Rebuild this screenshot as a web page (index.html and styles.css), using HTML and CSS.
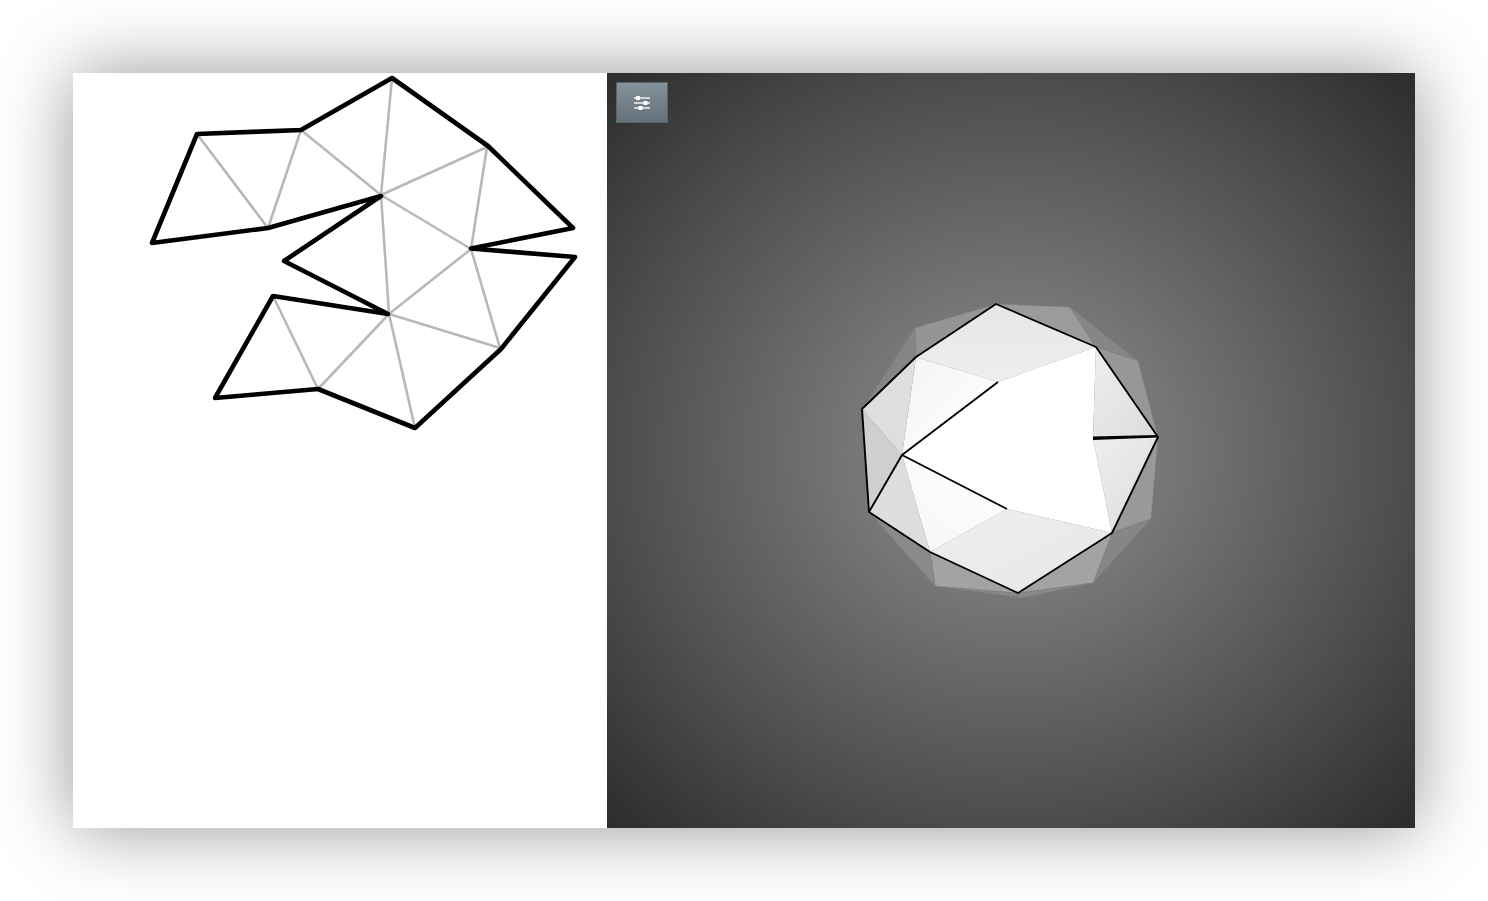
FILE: index.html
```html
<!DOCTYPE html>
<html lang="en">
<head>
  <meta charset="UTF-8" />
  <title>Origami</title>
  <link rel="stylesheet" href="styles.css">
</head>
<body>
  <div class="window">
    <div class="pattern-pane">
      <svg class="drawing pattern" viewBox="73 73 534 755">
        <g class="creases">
          <line x1="197" y1="134" x2="268" y2="228" />
          <line x1="301" y1="130" x2="268" y2="228" />
          <line x1="301" y1="130" x2="381" y2="195" />
          <line x1="392" y1="78" x2="381" y2="195" />
          <line x1="381" y1="195" x2="487" y2="147" />
          <line x1="487" y1="147" x2="471" y2="249" />
          <line x1="381" y1="195" x2="471" y2="249" />
          <line x1="381" y1="195" x2="389" y2="314" />
          <line x1="471" y1="249" x2="389" y2="314" />
          <line x1="471" y1="249" x2="500" y2="348" />
          <line x1="389" y1="314" x2="500" y2="348" />
          <line x1="389" y1="314" x2="318" y2="389" />
          <line x1="389" y1="314" x2="415" y2="428" />
          <line x1="273" y1="296" x2="318" y2="389" />
        </g>
        <polygon class="outline" points="392,78 488,146 573,228 471,248.5 575,257 501,349 415,428 318,389 215,398 273,296 388,314 284,261 381,196 268,228 152,243 197,134 301,130" />
      </svg>
    </div>

    <div class="preview-pane">
      <button class="settings-btn">
        <svg class="settings-icon" viewBox="0 0 20 16">
          <line x1="2" y1="3" x2="18" y2="3" />
          <line x1="2" y1="8" x2="18" y2="8" />
          <line x1="2" y1="13" x2="18" y2="13" />
          <rect x="4" y="1" width="4" height="4" rx="0.5" />
          <rect x="11.5" y="6" width="4" height="4" rx="0.5" />
          <rect x="6.5" y="11" width="4" height="4" rx="0.5" />
        </svg>
      </button>

      <svg class="drawing model" viewBox="607 73 808 755">
        <defs>
          <linearGradient id="top-face" x1="0" y1="0" x2="0" y2="1">
            <stop offset="0" stop-color="#e6e6e6" />
            <stop offset="1" stop-color="#eeeeee" />
          </linearGradient>
          <linearGradient id="upper-left-face" x1="0" y1="0" x2="1" y2="1">
            <stop offset="0" stop-color="#f4f4f4" />
            <stop offset="1" stop-color="#ffffff" />
          </linearGradient>
          <linearGradient id="lower-left-face" x1="1" y1="0" x2="0" y2="1">
            <stop offset="0" stop-color="#ffffff" />
            <stop offset="1" stop-color="#f6f6f6" />
          </linearGradient>
          <linearGradient id="right-face" x1="0" y1="0" x2="1" y2="1">
            <stop offset="0" stop-color="#eeeeee" />
            <stop offset="1" stop-color="#dcdcdc" />
          </linearGradient>
          <linearGradient id="bottom-face" x1="0" y1="0" x2="1" y2="1">
            <stop offset="0" stop-color="#efefef" />
            <stop offset="1" stop-color="#e6e6e6" />
          </linearGradient>
        </defs>

        <!-- back of the model -->
        <g class="back-faces">
          <polygon fill="#858585" points="862,409 915,328 916,357" />
          <polygon fill="#959595" points="915,328 996,304 916,357" />
          <polygon fill="#9b9b9b" points="996,304 1070,307 1096,347" />
          <polygon fill="#868686" points="1070,307 1138,361 1096,347" />
          <polygon fill="#979797" points="1096,347 1138,361 1158,437" />
          <polygon fill="#999999" points="1158,437 1151,519 1112,533" />
          <polygon fill="#868686" points="1112,533 1151,519 1093,583" />
          <polygon fill="#a3a3a3" points="1112,533 1093,583 1018,593" />
          <polygon fill="#888888" points="1018,593 1093,583 1022,598 935,586" />
          <polygon fill="#a3a3a3" points="930,552 935,586 1018,593" />
          <polygon fill="#8a8a8a" points="869,512 930,552 935,586" />
        </g>

        <!-- front of the model -->
        <g class="front-faces">
          <polygon fill="url(#top-face)" points="916,357 996,304 1096,347 998,382" />
          <polygon fill="url(#upper-left-face)" points="916,357 998,382 902,455" />
          <polygon fill="#ffffff" points="902,455 998,382 1096,347 1093,438 1112,533 1007,509" />
          <polygon fill="url(#right-face)" points="1096,347 1158,437 1093,438" />
          <polygon fill="url(#right-face)" points="1093,438 1158,437 1112,533" />
          <polygon fill="url(#bottom-face)" points="1007,509 1112,533 1018,593 930,552" />
          <polygon fill="url(#lower-left-face)" points="902,455 1007,509 930,552" />
          <polygon fill="#dddddd" points="902,455 930,552 869,512" />
          <polygon fill="#cfcfcf" points="862,409 902,455 869,512" />
          <polygon fill="#dedede" points="862,409 916,357 902,455" />
        </g>

        <polygon class="edge" points="996,304 1096,347 1158,437 1112,533 1018,593 930,552 869,512 862,409 916,357" />
        <polyline class="edge" points="998,382 902,455 1007,509" />
        <line class="edge" x1="902" y1="455" x2="869" y2="512" />
        <polygon class="edge-thick" points="1093,436.5 1158,435 1158,437.5 1093,440" />
      </svg>
    </div>
  </div>
</body>
</html>
```

FILE: styles.css
```css
* {
  box-sizing: border-box;
}

body {
  margin: 0;
  padding: 73px;
  background: #fff;
  height: 901px;
  overflow: hidden;
  font-family: "Liberation Sans", Arial, sans-serif;
}

.window {
  display: flex;
  height: 755px;
  box-shadow: 0 0 70px rgba(0, 0, 0, 0.42);
}

.pattern-pane {
  width: 534px;
  background: #fff;
}

.preview-pane {
  position: relative;
  flex: 1;
  background: radial-gradient(ellipse farthest-corner at center, #808080 0%, #767676 28%, #4c4c4c 70%, #2c2c2c 100%);
}

.drawing {
  display: block;
  width: 100%;
  height: 100%;
}

.pattern,
.model {
  filter: blur(0.4px);
}

.creases line {
  stroke: #b7bab4;
  stroke-width: 2.6;
}

.outline {
  fill: none;
  stroke: #000;
  stroke-width: 4.6;
  stroke-linejoin: round;
}

.back-faces polygon {
  stroke: #7a7a7a;
  stroke-width: 0.8;
  stroke-dasharray: 2 2;
}

.edge {
  fill: none;
  stroke: #000;
  stroke-width: 1.9;
  stroke-linejoin: round;
}

.edge-thick {
  fill: #000;
}

.settings-btn {
  position: absolute;
  top: 9px;
  left: 9px;
  display: flex;
  align-items: center;
  justify-content: center;
  width: 52px;
  height: 41px;
  padding: 0;
  border: 1px solid #59656c;
  background: linear-gradient(#85929a, #65717a);
}

.settings-icon {
  width: 20px;
  height: 16px;
}

.settings-icon line {
  stroke: #cfd4d7;
  stroke-width: 2;
}

.settings-icon rect {
  fill: #fff;
}
```
